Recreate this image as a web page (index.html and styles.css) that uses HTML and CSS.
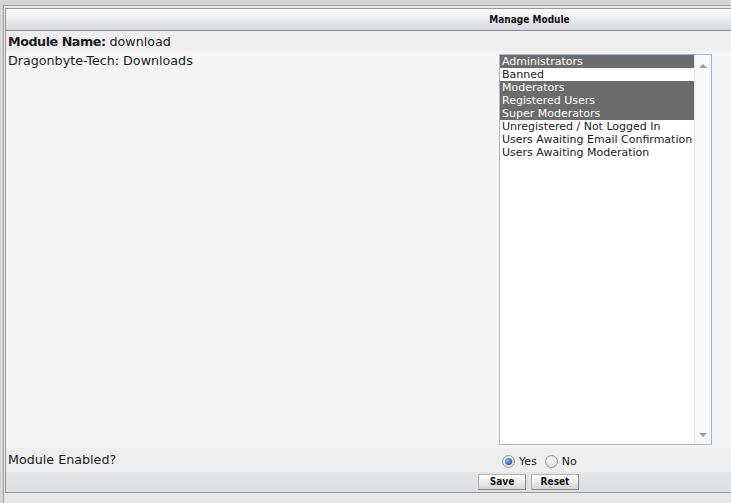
FILE: index.html
```html
<!DOCTYPE html>
<html>
<head>
<meta charset="utf-8">
<title>Manage Module</title>
<link rel="stylesheet" href="styles.css">
</head>
<body>
<div class="frame">
  <div class="panel">
    <div class="head">Manage Module</div>
    <div class="row alt1 first">
      <div class="label"><b>Module Name:</b> download</div>
      <div class="field"></div>
    </div>
    <div class="row alt2 tall">
      <div class="label">Dragonbyte-Tech: Downloads</div>
      <div class="field">
        <div class="listbox">
          <ul class="options">
            <li class="sel">Administrators</li>
            <li>Banned</li>
            <li class="sel">Moderators</li>
            <li class="sel">Registered Users</li>
            <li class="sel">Super Moderators</li>
            <li>Unregistered / Not Logged In</li>
            <li>Users Awaiting Email Confirmation</li>
            <li>Users Awaiting Moderation</li>
          </ul>
          <div class="scroll">
            <span class="arrow up"></span>
            <span class="arrow down"></span>
          </div>
        </div>
      </div>
    </div>
    <div class="row alt1 enabled">
      <div class="label">Module Enabled?</div>
      <div class="field radios">
        <label class="radio"><span class="dot on"></span>Yes</label>
        <label class="radio"><span class="dot"></span>No</label>
      </div>
    </div>
    <div class="submit">
      <button class="btn">Save</button>
      <button class="btn">Reset</button>
    </div>
  </div>
</div>
</body>
</html>
```

FILE: styles.css
```css
html, body {
  margin: 0;
  padding: 0;
  overflow: hidden;
  height: 503px;
}
body {
  background: #d6d6d6;
  font-family: "DejaVu Sans", Verdana, sans-serif;
  color: #1a1a22;
}
.frame {
  margin-top: 5px;
  margin-left: 3px;
  border-top: 1px solid #a0a0a0;
  border-left: 1px solid #a0a0a0;
  padding-top: 2px;
  padding-left: 1px;
  background: #e8e8e8;
  height: 520px;
}
.panel {
  border-top: 1px solid #9a9a9a;
  border-left: 1px solid #9a9a9a;
  border-bottom: 1px solid #9a9a9a;
  background: #f4f4f4;
}
.head {
  height: 21px;
  line-height: 21px;
  border-bottom: 1px solid #8e8e8e;
  background: linear-gradient(#fbfbfb, #f2f3f5 30%, #d5d8de);
  text-align: center;
  padding-left: 322px;
  font-family: "DejaVu Sans Condensed", "DejaVu Sans", sans-serif;
  font-weight: bold;
  font-size: 10px;
  color: #111;
}
.row {
  display: grid;
  grid-template-columns: 493px 1fr;
}
.alt1 { background: #eeeeee; }
.alt2 { background: #f5f5f5; }
.label {
  padding-left: 2px;
  font-size: 12.7px;
  line-height: 20px;
}
.label b {
  letter-spacing: -0.45px;
}
.first { height: 20px; }
.first .label { line-height: 21px; }
.tall { height: 397px; }
.tall .field { padding-top: 3px; }
.enabled { height: 24px; }
.enabled .label { line-height: 24px; }
.listbox {
  width: 211px;
  height: 389px;
  border: 1px solid #a7b7c6;
  background: #fff;
  display: flex;
}
.options {
  list-style: none;
  margin: 0;
  padding: 0;
  flex: 1;
  font-size: 11px;
  line-height: 13px;
}
.options li {
  padding-left: 2px;
  white-space: nowrap;
  height: 13px;
}
.options li.sel {
  background: #6c6c6c;
  color: #fff;
}
.scroll {
  width: 16px;
  border-left: 1px solid #e6e6e6;
  background: #f8f8f8;
  display: flex;
  flex-direction: column;
  justify-content: space-between;
  align-items: center;
  padding: 9px 0 7px;
}
.arrow {
  width: 0;
  height: 0;
  border-left: 4px solid transparent;
  border-right: 4px solid transparent;
}
.arrow.up { border-bottom: 4px solid #9c9c9c; }
.arrow.down { border-top: 4px solid #9c9c9c; }
.radios {
  display: flex;
  align-items: center;
  padding-left: 3px;
  padding-top: 3px;
  font-size: 11px;
}
.radio {
  display: flex;
  align-items: center;
  margin-right: 8px;
}
.dot {
  width: 11px;
  height: 11px;
  border-radius: 50%;
  border: 1px solid #8d9db0;
  background: radial-gradient(circle at 40% 40%, #f4f4f4, #d8d8d8);
  margin-right: 4px;
  position: relative;
}
.dot.on::after {
  content: "";
  position: absolute;
  left: 2px;
  top: 2px;
  width: 7px;
  height: 7px;
  border-radius: 50%;
  background: radial-gradient(circle at 35% 35%, #8fc2ea, #1f5f99 70%);
}
.submit {
  height: 20px;
  background: linear-gradient(#e3e5e7, #dcdee0);
  display: flex;
  justify-content: center;
  align-items: center;
  gap: 5px;
  padding-left: 320px;
}
.btn {
  width: 48px;
  height: 16px;
  padding: 0;
  border: 1px solid #b4b4b4;
  border-bottom-color: #8a8a8a;
  border-right-color: #8a8a8a;
  background: linear-gradient(#ffffff, #e8e8e8 60%, #d4d4d4);
  font-family: "DejaVu Sans Condensed", "DejaVu Sans", sans-serif;
  font-weight: bold;
  font-size: 10px;
  color: #111;
  line-height: 14px;
}
```
